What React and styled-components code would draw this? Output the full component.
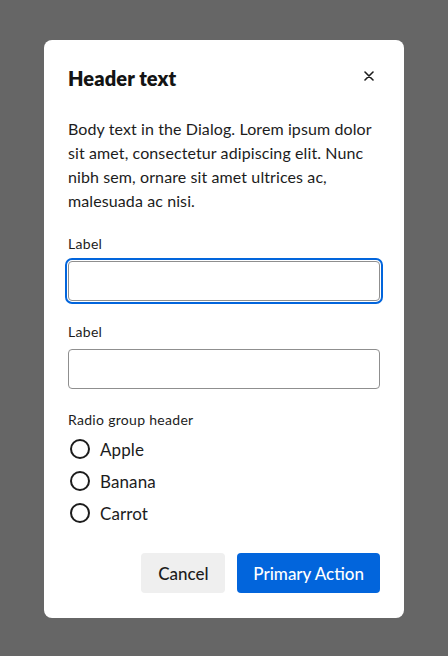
import styled, { createGlobalStyle } from "styled-components";

const GlobalStyle = createGlobalStyle`
  html, body {
    margin: 0;
    padding: 0;
    background: #666666;
  }
  body {
    font-family: "Lato", "Noto Sans", sans-serif;
    color: #1c1c1c;
  }
`;

const Backdrop = styled.div`
  width: 448px;
  height: 656px;
  background: #666666;
  display: flex;
  justify-content: center;
  padding-top: 40px;
  box-sizing: border-box;
`;

const Dialog = styled.div`
  width: 360px;
  height: 578px;
  box-sizing: border-box;
  background: #ffffff;
  border-radius: 8px;
  padding: 24px;
  display: flex;
  flex-direction: column;
`;

const HeaderRow = styled.div`
  display: flex;
  align-items: center;
  justify-content: space-between;
  height: 28px;
`;

const Title = styled.h2`
  margin: 0;
  font-family: "Lato", sans-serif;
  font-weight: 800;
  font-size: 20px;
  line-height: 28px;
  letter-spacing: 0.1px;
  color: #141414;
`;

const CloseButton = styled.button`
  border: none;
  background: transparent;
  width: 24px;
  height: 24px;
  padding: 0;
  margin-right: -1px;
  margin-top: -4px;
  display: flex;
  align-items: center;
  justify-content: center;
  cursor: pointer;
  color: #1c1c1c;
`;

const Body = styled.p`
  margin: 25px 0 0;
  font-size: 16px;
  line-height: 24px;
  letter-spacing: 0.1px;
  color: #1c1c1c;
`;

const Field = styled.div`
  display: flex;
  flex-direction: column;
  margin-top: 21px;
`;

const Label = styled.label`
  font-size: 14px;
  line-height: 20px;
  letter-spacing: 0.3px;
  color: #1c1c1c;
  margin-bottom: ${({ $gap }) => $gap ?? 7}px;
`;

const Input = styled.input`
  height: 40px;
  box-sizing: border-box;
  border: 1px solid #8f8f8f;
  border-radius: 4px;
  background: #fff;
  font: inherit;
  padding: 0 12px;
  outline: ${({ $focused }) => ($focused ? "2px solid #0265dc" : "none")};
  outline-offset: 1px;
`;

const RadioRow = styled.label`
  display: flex;
  align-items: center;
  gap: 10px;
  height: 32px;
  font-size: 17px;
  letter-spacing: 0.1px;
  color: #1c1c1c;
`;

const RadioCircle = styled.span`
  width: 20px;
  height: 20px;
  box-sizing: border-box;
  border: 2px solid #1c1c1c;
  border-radius: 50%;
  margin-left: 2px;
`;

const Actions = styled.div`
  display: flex;
  justify-content: flex-end;
  gap: 12px;
  margin-top: 24px;
`;

const Button = styled.button`
  height: 40px;
  border: none;
  border-radius: 4px;
  padding: 0 16px;
  min-width: 84px;
  font-family: inherit;
  font-size: 17px;
  font-weight: 500;
  background: ${({ $primary }) => ($primary ? "#0265dc" : "#efefef")};
  color: ${({ $primary }) => ($primary ? "#ffffff" : "#1c1c1c")};
  cursor: pointer;
`;

const fruits = ["Apple", "Banana", "Carrot"];

export default function App() {
  return (
    <>
      <GlobalStyle />
      <Backdrop>
        <Dialog>
          <HeaderRow>
            <Title>Header text</Title>
            <CloseButton aria-label="Close">
              <svg width="10" height="10" viewBox="0 0 10 10">
                <path d="M1 1L9 9M9 1L1 9" stroke="currentColor" strokeWidth="1.6" strokeLinecap="round" />
              </svg>
            </CloseButton>
          </HeaderRow>
          <Body>
            Body text in the Dialog. Lorem ipsum dolor sit amet, consectetur adipiscing elit.
            Nunc nibh sem, ornare sit amet ultrices ac, malesuada ac nisi.
          </Body>
          <Field>
            <Label>Label</Label>
            <Input $focused />
          </Field>
          <Field>
            <Label>Label</Label>
            <Input />
          </Field>
          <Field>
            <Label $gap={3}>Radio group header</Label>
            {fruits.map((f) => (
              <RadioRow key={f}>
                <RadioCircle />
                {f}
              </RadioRow>
            ))}
          </Field>
          <Actions>
            <Button>Cancel</Button>
            <Button $primary>Primary Action</Button>
          </Actions>
        </Dialog>
      </Backdrop>
    </>
  );
}
